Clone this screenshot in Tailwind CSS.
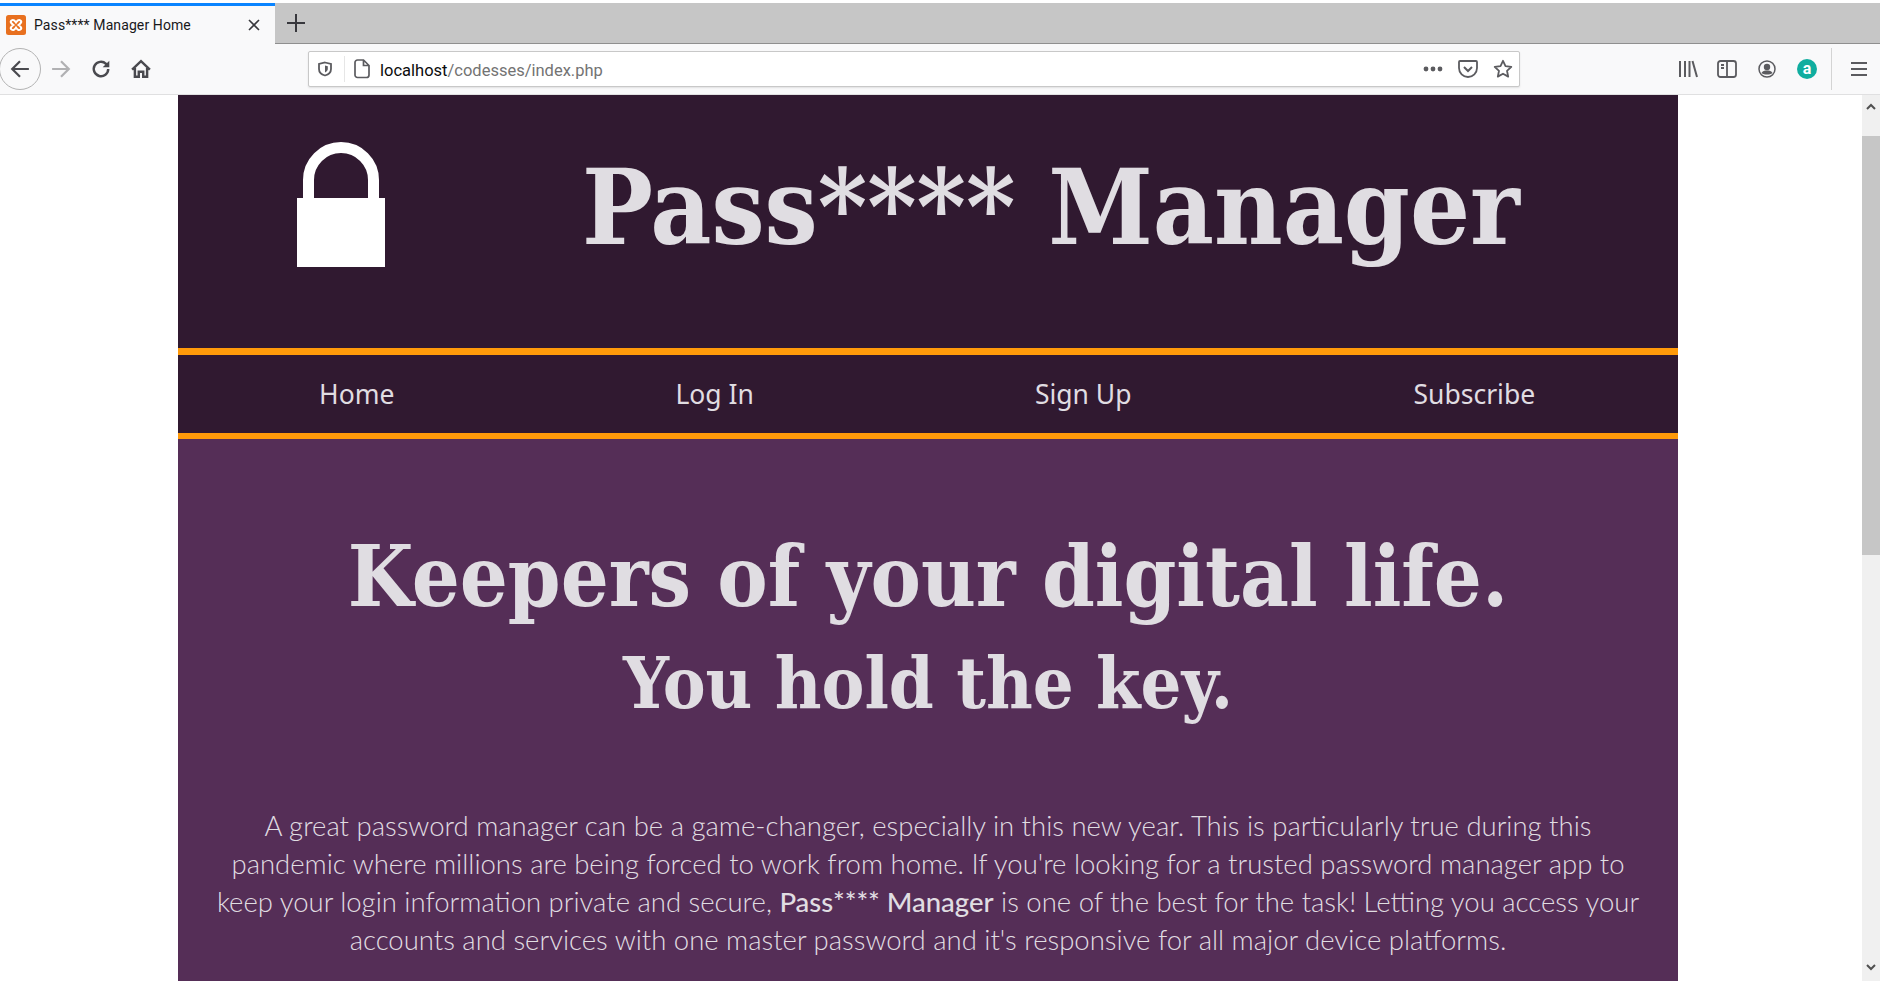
<!DOCTYPE html>
<html><head><meta charset="utf-8"><script src="https://cdn.jsdelivr.net/npm/@tailwindcss/browser@4"></script></head>
<body class="h-[981px] w-[1880px] overflow-hidden bg-white font-['Roboto','Liberation_Sans',sans-serif]">
<div class="h-[3px] bg-white"></div>
<div class="flex h-[41px] items-stretch border-b border-[#8f8f8f] bg-[#c6c6c6]">
  <div class="flex h-[41px] w-[275px] items-center border-t-[3px] border-[#0a84ff] bg-[#f9f9fa] pl-[6px]">
    <svg class="h-[20px] w-[20px] shrink-0" viewBox="0 0 20 20"><rect width="20" height="20" rx="2.500" fill="#e8701f"/><path d="M5.500 5.500C7.500 4 9 6 10 7.500 11 6 12.500 4 14.500 5.500 16.500 7 14 9 12.500 10c1.500 1 4 3 2 4.500-2 1.500-3.500-.5-4.500-2-1 1.500-2.500 3.500-4.500 2C3.500 13 6 11 7.500 10 6 9 3.500 7 5.500 5.500z" fill="none" stroke="#fff" stroke-width="2"/></svg>
    <span class="ml-[8px] text-[14px] tracking-[0.1px] whitespace-nowrap text-[#18181a]">Pass**** Manager Home</span>
    <svg class="ml-auto mr-[15px] h-[12px] w-[12px]" viewBox="0 0 12 12"><path d="M1 1l10 10M11 1L1 11" stroke="#38383d" stroke-width="1.600"/></svg>
  </div>
  <div class="flex w-[42px] items-center justify-center"><svg class="h-[18px] w-[18px]" viewBox="0 0 18 18"><path d="M9 0v18M0 9h18" stroke="#38383d" stroke-width="2"/></svg></div>
</div>
<div class="flex h-[51px] items-center border-b border-[#e0e0e1] bg-[#f9f9fa]">
  <div class="flex h-[42px] w-[42px] -translate-x-px items-center justify-center rounded-full border border-[#b3b3b3] bg-[#f9f9fa]"><svg class="h-[20px] w-[20px]" viewBox="0 0 18 18" fill="none"><path d="M17 9H2M9 2L2 9l7 7" stroke="#4a4a4f" stroke-width="2"/></svg></div>
  <svg class="ml-[9px] h-[20px] w-[20px]" viewBox="0 0 18 18" fill="none"><path d="M1 9h15M9 2l7 7-7 7" stroke="#b1b1b3" stroke-width="2"/></svg>
  <svg class="ml-[20px] h-[20px] w-[20px]" viewBox="0 0 18 18" fill="none"><path d="M15.500 9a6.500 6.500 0 1 1-2-4.700L15.500 6" stroke="#4a4a4f" stroke-width="2.200"/><path d="M16.500 1.500v6h-6z" fill="#4a4a4f"/></svg>
  <svg class="ml-[20px] h-[20px] w-[20px]" viewBox="0 0 18 18" fill="none"><path d="M1 9.500L9 2l8 7.500M3.500 8V16h3.500v-4.500h4V16h3.500V8" stroke="#4a4a4f" stroke-width="2.200"/></svg>
  <div class="ml-[157px] flex h-[36px] w-[1212px] items-center rounded-[2px] border border-[#c8c8c8] bg-white shadow-[0_1px_2px_rgba(0,0,0,0.1)]">
    <svg class="ml-[8px] h-[16px] w-[16px]" viewBox="0 0 16 16" fill="none"><path d="M8 1.500l6 1.500v5c0 3-2.500 5.500-6 6.500-3.500-1-6-3.500-6-6.500V3z" stroke="#5b5b5f" stroke-width="1.800"/><path d="M8 4.500l2.800.7v2.800c0 1.500-1.200 2.800-2.800 3.500z" fill="#5b5b5f"/></svg>
    <div class="ml-[11px] h-[26px] w-px bg-[#e6e6e6]"></div>
    <svg class="ml-[9px] h-[20px] w-[16px]" viewBox="0 0 16 20" fill="none"><path d="M3.500 1h6L15 6.500V16a2.500 2.500 0 0 1-2.500 2.500h-9A2.500 2.500 0 0 1 1 16V3.500A2.500 2.500 0 0 1 3.500 1zM9.500 1v5.500H15" stroke="#5b5b5f" stroke-width="1.700"/></svg>
    <span class="ml-[10px] pt-[4px] text-[16.5px] whitespace-nowrap text-[#0c0c0d]">localhost<span class="text-[#737373]">/codesses/index.php</span></span>
    <div class="ml-auto flex items-center">
      <svg class="h-[6px] w-[20px]" viewBox="0 0 20 6" fill="#5b5b5f"><circle cx="3" cy="3" r="2.400"/><circle cx="10" cy="3" r="2.400"/><circle cx="17" cy="3" r="2.400"/></svg>
      <svg class="ml-[15px] h-[18px] w-[20px]" viewBox="0 0 20 18" fill="none"><path d="M2 1h16a1 1 0 0 1 1 1v6a9 9 0 0 1-18 0V2a1 1 0 0 1 1-1z" stroke="#5b5b5f" stroke-width="1.800"/><path d="M6 7l4 4 4-4" stroke="#5b5b5f" stroke-width="2"/></svg>
      <svg class="ml-[15px] mr-[6px] h-[20px] w-[20px]" viewBox="0 0 20 20" fill="none"><path d="M10 1.800l2.500 5.300 5.800.7-4.300 4 1.200 5.800-5.200-2.900-5.200 2.900L6 11.800l-4.300-4 5.800-.7z" stroke="#5b5b5f" stroke-width="1.800" stroke-linejoin="round"/></svg>
    </div>
  </div>
  <svg class="ml-[158px] h-[18px] w-[20px]" viewBox="0 0 20 18" fill="none" stroke="#5b5b5f" stroke-width="2"><path d="M2 1v16M7 1v16M11.500 1v16M14.500 1l4.500 16"/></svg>
  <svg class="ml-[19px] h-[18px] w-[20px]" viewBox="0 0 20 18" fill="none" stroke="#5b5b5f" stroke-width="1.800"><rect x="1" y="1" width="18" height="16" rx="2.500"/><path d="M10 1v16M4 5h3M4 8h3" /></svg>
  <svg class="ml-[21px] h-[18px] w-[18px]" viewBox="0 0 18 18" fill="none"><circle cx="9" cy="9" r="8" stroke="#5b5b5f" stroke-width="1.500"/><circle cx="9" cy="7" r="3.200" fill="#5b5b5f"/><path d="M3.500 13c1-2 3-2.500 5.500-2.500s4.500.5 5.500 2.500c-3 2-8 2-11 0z" fill="#5b5b5f"/></svg>
  <div class="ml-[21px] flex h-[20px] w-[20px] items-center justify-center rounded-full bg-[#10ad9f] text-[16px] leading-none font-bold text-white">a</div>
  <div class="ml-[14px] h-[42px] w-px bg-[#d4d4d4]"></div>
  <svg class="ml-[19px] h-[16px] w-[16px]" viewBox="0 0 16 16" stroke="#5b5b5f" stroke-width="2"><path d="M0 2h16M0 8h16M0 14h16"/></svg>
</div>
<div class="flex h-[886px]">
  <main class="ml-[178px] h-full w-[1500px] shrink-0 overflow-hidden bg-[#552e57]">
    <header class="flex h-[253px] items-start bg-[#301930]">
      <svg class="ml-[119px] mt-[47px] h-[125px] w-[88px] shrink-0" viewBox="0 0 88 125"><path d="M11.500 60V38a32.500 32.500 0 0 1 65 0v22" fill="none" stroke="#fff" stroke-width="11"/><rect x="0" y="56" width="88" height="69" fill="#fff"/></svg>
      <h1 class="ml-[197px] mt-[48px] whitespace-nowrap font-['DejaVu_Serif_Condensed','DejaVu_Serif',serif] text-[105px] leading-[128px] font-bold text-[#e0dde2]">Pass**** Manager</h1>
    </header>
    <nav class="flex h-[91px] items-center gap-[281px] border-t-[7px] border-b-[6px] border-[#ff9a0a] bg-[#301930] pt-[2px] pl-[141px] font-['Noto_Sans',sans-serif] text-[26.5px] text-[#e0dde2]">
      <span>Home</span><span>Log In</span><span>Sign Up</span><span class="ml-[1px]">Subscribe</span>
    </nav>
    <section class="flex flex-col items-center text-[#e0dde2]">
      <h2 class="mt-[83px] whitespace-nowrap font-['DejaVu_Serif_Condensed','DejaVu_Serif',serif] text-[84px] leading-[110px] font-bold">Keepers of your digital life.</h2>
      <h3 class="pt-[1px] whitespace-nowrap font-['DejaVu_Serif_Condensed','DejaVu_Serif',serif] text-[71.500px] leading-[100px] font-bold">You hold the key.</h3>
      <p class="mt-[74px] w-[1480px] text-center font-['Lato',sans-serif] text-[27.500px] leading-[38px] font-light">A great password manager can be a game-changer, especially in this new year. This is particularly true during this<br>pandemic where millions are being forced to work from home. If you're looking for a trusted password manager app to<br>keep your login information private and secure, <strong class="font-medium">Pass**** Manager</strong> is one of the best for the task! Letting you access your<br>accounts and services with one master password and it's responsive for all major device platforms.</p>
    </section>
  </main>
  <div class="ml-auto flex h-full w-[18px] flex-col bg-[#f0f0f0]">
    <div class="flex h-[41px] items-start justify-center pt-[8px]"><svg class="h-[8px] w-[10px]" viewBox="0 0 10 8" fill="none"><path d="M1 6l4-4 4 4" stroke="#505050" stroke-width="2"/></svg></div>
    <div class="h-[419px] bg-[#c6c6c6]"></div>
    <div class="mt-auto flex h-[18px] justify-center"><svg class="h-[8px] w-[10px]" viewBox="0 0 10 8" fill="none"><path d="M1 2l4 4 4-4" stroke="#505050" stroke-width="2"/></svg></div>
  </div>
</div>
</body></html>
